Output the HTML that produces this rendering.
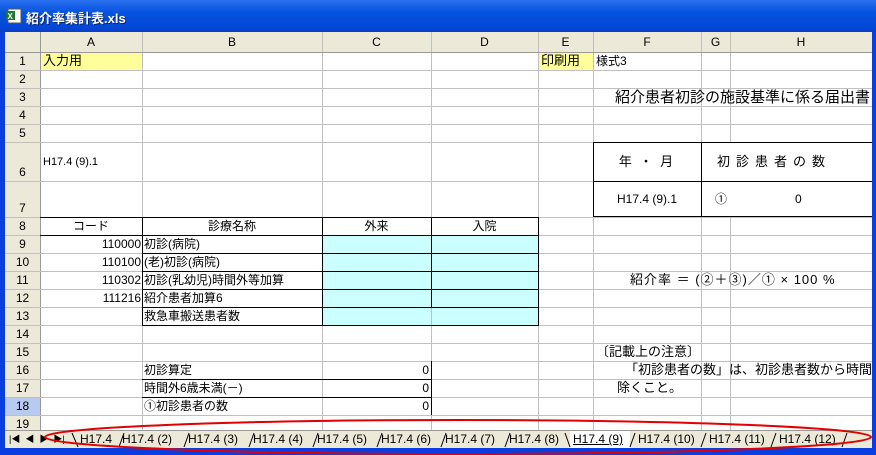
<!DOCTYPE html>
<html><head><meta charset="utf-8"><style>
*{margin:0;padding:0;box-sizing:border-box}
body{width:876px;height:455px;overflow:hidden;background:#0a3ee0;font-family:"Liberation Sans","MS PGothic","Noto Sans CJK JP",sans-serif;font-size:12px;color:#000;position:relative}
.a{position:absolute}
#title{left:0;top:0;width:876px;height:32px;background:linear-gradient(#2a70f0,#0552e0 40%,#0348d6 85%,#0a3ec8);}
#title span{position:absolute;left:26px;top:8px;color:#fff;font-weight:bold;font-size:13px;text-shadow:1px 1px #0a246a}
#sheet{left:5px;top:32px;width:867px;height:416px;background:#fff;overflow:hidden}
.h{position:absolute;height:1px;background:#c0c0c0}
.v{position:absolute;width:1px;background:#c0c0c0}
.k{background:#000!important}
.t{position:absolute;white-space:nowrap;line-height:18px}
.hd{position:absolute;background:#ece9d8;text-align:center;line-height:18px;color:#000}
.tab{position:absolute;top:432px;white-space:nowrap;font-size:12px}
</style></head><body>
<div id="title" class="a">
<svg class="a" style="left:6px;top:8px" width="16" height="16"><rect x="2" y="1" width="13" height="14" fill="#fff" stroke="#555"/><rect x="0" y="3" width="9" height="9" fill="#1c7a2c"/><text x="1.5" y="11" font-size="8" fill="#fff" font-family="Liberation Sans" font-weight="bold">X</text></svg>
<span>紹介率集計表.xls</span></div>
<div id="sheet" class="a">
<!-- header backgrounds (coords relative: x-5, y-32) -->
<div class="hd" style="left:0;top:0;width:867px;height:20px"></div>
<div class="hd" style="left:0;top:0;width:35px;height:416px"></div>
<div class="a" style="left:0;top:365px;width:35px;height:18px;background:#b6cbef"></div>
<!-- col header labels -->
<div class="t" style="left:35px;top:1px;width:102px;text-align:center">A</div>
<div class="t" style="left:137px;top:1px;width:180px;text-align:center">B</div>
<div class="t" style="left:317px;top:1px;width:109px;text-align:center">C</div>
<div class="t" style="left:426px;top:1px;width:107px;text-align:center">D</div>
<div class="t" style="left:533px;top:1px;width:55px;text-align:center">E</div>
<div class="t" style="left:588px;top:1px;width:108px;text-align:center">F</div>
<div class="t" style="left:696px;top:1px;width:29px;text-align:center">G</div>
<div class="t" style="left:725px;top:1px;width:142px;text-align:center">H</div>
<!-- fills -->
<div class="a" style="left:36px;top:21px;width:101px;height:17px;background:#ffff99"></div>
<div class="a" style="left:534px;top:21px;width:54px;height:17px;background:#ffff99"></div>
<div class="a" style="left:317px;top:203px;width:216px;height:90px;background:#ccffff"></div>
<!-- vertical grid lines -->
<div class="v" style="left:35px;top:0;height:416px;background:#999"></div>
<div class="v" style="left:137px;top:0;height:398px"></div>
<div class="v" style="left:317px;top:0;height:398px"></div>
<div class="v" style="left:426px;top:0;height:398px"></div>
<div class="v" style="left:533px;top:0;height:398px"></div>
<div class="v" style="left:588px;top:0;height:398px"></div>
<div class="v" style="left:696px;top:0;height:398px"></div>
<div class="v" style="left:725px;top:0;height:398px"></div>
<!-- horizontal lines -->
<div class="h" style="left:0;top:20px;width:867px;background:#999"></div>
<div class="h" style="left:0;top:38px;width:867px"></div>
<div class="h" style="left:0;top:56px;width:867px"></div>
<div class="h" style="left:0;top:74px;width:867px"></div>
<div class="h" style="left:0;top:92px;width:867px"></div>
<div class="h" style="left:0;top:110px;width:867px"></div>
<div class="h" style="left:0;top:149px;width:867px"></div>
<div class="h" style="left:0;top:185px;width:867px"></div>
<div class="h" style="left:0;top:203px;width:867px"></div>
<div class="h" style="left:0;top:221px;width:867px"></div>
<div class="h" style="left:0;top:239px;width:867px"></div>
<div class="h" style="left:0;top:257px;width:867px"></div>
<div class="h" style="left:0;top:275px;width:867px"></div>
<div class="h" style="left:0;top:293px;width:867px"></div>
<div class="h" style="left:0;top:311px;width:867px"></div>
<div class="h" style="left:0;top:329px;width:867px"></div>
<div class="h" style="left:0;top:347px;width:867px"></div>
<div class="h" style="left:0;top:365px;width:867px"></div>
<div class="h" style="left:0;top:383px;width:867px"></div>
<!-- black borders table rows 8-13 -->
<div class="h k" style="left:35px;top:185px;width:499px"></div>
<div class="h k" style="left:35px;top:203px;width:499px"></div>
<div class="h k" style="left:137px;top:221px;width:397px"></div>
<div class="h k" style="left:137px;top:239px;width:397px"></div>
<div class="h k" style="left:137px;top:257px;width:397px"></div>
<div class="h k" style="left:137px;top:275px;width:397px"></div>
<div class="h k" style="left:137px;top:293px;width:397px"></div>
<div class="v k" style="left:137px;top:185px;height:108px"></div>
<div class="v k" style="left:317px;top:185px;height:108px"></div>
<div class="v k" style="left:426px;top:185px;height:90px"></div>
<div class="v k" style="left:533px;top:185px;height:108px"></div>
<!-- rows 16-18 -->
<div class="h k" style="left:137px;top:347px;width:289px"></div>
<div class="h k" style="left:137px;top:365px;width:289px"></div>
<div class="v k" style="left:426px;top:329px;height:54px"></div>
<!-- right box -->
<div class="a" style="left:588px;top:110px;width:290px;height:75px;border:1px solid #000;background:#fff"></div>
<div class="h k" style="left:588px;top:149px;width:290px"></div>
<div class="v k" style="left:696px;top:110px;height:75px"></div>
<!-- row numbers -->
<div class="t" style="left:0;top:20px;width:35px;text-align:center">1</div>
<div class="t" style="left:0;top:38px;width:35px;text-align:center">2</div>
<div class="t" style="left:0;top:56px;width:35px;text-align:center">3</div>
<div class="t" style="left:0;top:74px;width:35px;text-align:center">4</div>
<div class="t" style="left:0;top:92px;width:35px;text-align:center">5</div>
<div class="t" style="left:0;top:131px;width:35px;text-align:center">6</div>
<div class="t" style="left:0;top:167px;width:35px;text-align:center">7</div>
<div class="t" style="left:0;top:185px;width:35px;text-align:center">8</div>
<div class="t" style="left:0;top:203px;width:35px;text-align:center">9</div>
<div class="t" style="left:0;top:221px;width:35px;text-align:center">10</div>
<div class="t" style="left:0;top:239px;width:35px;text-align:center">11</div>
<div class="t" style="left:0;top:257px;width:35px;text-align:center">12</div>
<div class="t" style="left:0;top:275px;width:35px;text-align:center">13</div>
<div class="t" style="left:0;top:293px;width:35px;text-align:center">14</div>
<div class="t" style="left:0;top:311px;width:35px;text-align:center">15</div>
<div class="t" style="left:0;top:329px;width:35px;text-align:center">16</div>
<div class="t" style="left:0;top:347px;width:35px;text-align:center">17</div>
<div class="t" style="left:0;top:365px;width:35px;text-align:center">18</div>
<div class="t" style="left:0;top:383px;width:35px;text-align:center">19</div>
<!-- cell text -->
<div class="t" style="left:38px;top:20px;font-size:13px">入力用</div>
<div class="t" style="left:536px;top:20px;font-size:13px">印刷用</div>
<div class="t" style="left:591px;top:20px">様式3</div>
<div class="t" style="left:610px;top:57px;font-size:15px">紹介患者初診の施設基準に係る届出書</div>
<div class="t" style="left:38px;top:121px;font-size:11px">H17.4 (9).1</div>
<div class="t" style="left:588px;top:121px;width:108px;text-align:center;font-size:13px;letter-spacing:2px">年 ・ 月</div>
<div class="t" style="left:712px;top:121px;font-size:13px;letter-spacing:6px">初診患者の数</div>
<div class="t" style="left:588px;top:158px;width:108px;text-align:center;font-size:12px">H17.4 (9).1</div>
<div class="t" style="left:710px;top:158px">①</div>
<div class="t" style="left:790px;top:158px">0</div>
<div class="t" style="left:35px;top:185px;width:102px;text-align:center">コード</div>
<div class="t" style="left:137px;top:185px;width:180px;text-align:center">診療名称</div>
<div class="t" style="left:317px;top:185px;width:109px;text-align:center">外来</div>
<div class="t" style="left:426px;top:185px;width:107px;text-align:center">入院</div>
<div class="t" style="left:35px;top:203px;width:101px;text-align:right">110000</div>
<div class="t" style="left:35px;top:221px;width:101px;text-align:right">110100</div>
<div class="t" style="left:35px;top:239px;width:101px;text-align:right">110302</div>
<div class="t" style="left:35px;top:257px;width:101px;text-align:right">111216</div>
<div class="t" style="left:139px;top:203px">初診(病院)</div>
<div class="t" style="left:139px;top:221px">(老)初診(病院)</div>
<div class="t" style="left:139px;top:239px">初診(乳幼児)時間外等加算</div>
<div class="t" style="left:139px;top:257px">紹介患者加算6</div>
<div class="t" style="left:139px;top:275px">救急車搬送患者数</div>
<div class="t" style="left:625px;top:239px;font-size:13px;letter-spacing:1px">紹介率 ＝ (②＋③)／① × 100 %</div>
<div class="t" style="left:591px;top:311px;font-size:13px">〔記載上の注意〕</div>
<div class="t" style="left:620px;top:329px;font-size:13px">「初診患者の数」は、初診患者数から時間</div>
<div class="t" style="left:612px;top:347px;font-size:13px">除くこと。</div>
<div class="t" style="left:139px;top:329px">初診算定</div>
<div class="t" style="left:139px;top:347px">時間外6歳未満(－)</div>
<div class="t" style="left:139px;top:365px">①初診患者の数</div>
<div class="t" style="left:317px;top:329px;width:107px;text-align:right">0</div>
<div class="t" style="left:317px;top:347px;width:107px;text-align:right">0</div>
<div class="t" style="left:317px;top:365px;width:107px;text-align:right">0</div>
</div>
<!-- tab bar -->
<div class="a" style="left:5px;top:430px;width:867px;height:19px;background:#ece9d8;border-top:1px solid #999"></div>
<div class="a" style="left:5px;top:448px;width:867px;height:7px;background:#0a3ee0"></div>
<div class="a" style="left:9px;top:432px;font-size:9px;line-height:14px">|◀ &nbsp;◀ &nbsp;▶ &nbsp;▶|</div>
<div class="a" style="left:570px;top:431px;width:60px;height:17px;background:#fff"></div>
<div class="tab" style="left:80px">H17.4</div>
<div class="tab" style="left:122px">H17.4 (2)</div>
<div class="tab" style="left:188px">H17.4 (3)</div>
<div class="tab" style="left:253px">H17.4 (4)</div>
<div class="tab" style="left:317px">H17.4 (5)</div>
<div class="tab" style="left:381px">H17.4 (6)</div>
<div class="tab" style="left:445px">H17.4 (7)</div>
<div class="tab" style="left:509px">H17.4 (8)</div>
<div class="tab" style="left:573px;text-decoration:underline">H17.4 (9)</div>
<div class="tab" style="left:638px">H17.4 (10)</div>
<div class="tab" style="left:709px">H17.4 (11)</div>
<div class="tab" style="left:779px">H17.4 (12)</div>
<svg class="a" style="left:0;top:0" width="876" height="455">
<g stroke="#000" stroke-width="1" fill="none">
<path d="M72 433 L78 447 M119 447 L124 433 M184 447 L189 433 M249 447 L254 433 M313 447 L318 433 M377 447 L382 433 M441 447 L446 433 M505 447 L510 433 M565 433 L570 447 M630 447 L635 433 M701 447 L706 433 M771 447 L776 433 M842 447 L847 433"/>
</g>
<ellipse cx="458" cy="437" rx="413" ry="17" fill="none" stroke="#e00000" stroke-width="2"/>
</svg>
</body></html>
